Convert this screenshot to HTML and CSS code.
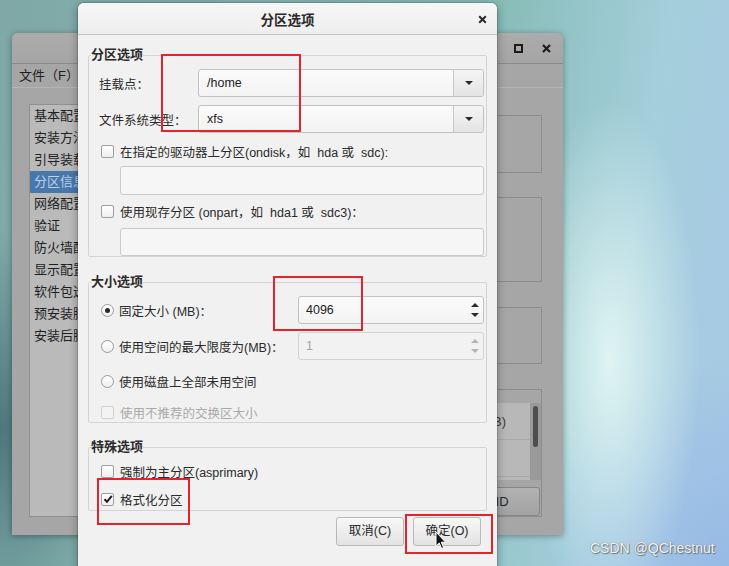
FILE: index.html
```html
<!DOCTYPE html>
<html lang="zh-CN">
<head>
<meta charset="utf-8">
<title>分区选项</title>
<link rel="stylesheet" href="styles.css">
</head>
<body>
<div class="desktop">

  <div class="bgwin">
    <div class="bgwin-title">
      <span class="wbtn wbtn-max"></span>
      <svg class="wbtn-close" width="9" height="9" viewBox="0 0 9 9"><path d="M1 1 L8 8 M8 1 L1 8" stroke="#1c1c1c" stroke-width="2.2"/></svg>
    </div>
    <div class="bgwin-menu">文件（F）</div>
    <div class="bgwin-body">
      <ul class="nav">
        <li>基本配置</li>
        <li>安装方法</li>
        <li>引导装载程序选项</li>
        <li class="sel">分区信息</li>
        <li>网络配置</li>
        <li>验证</li>
        <li>防火墙配置</li>
        <li>显示配置</li>
        <li>软件包选择</li>
        <li>预安装脚本</li>
        <li>安装后脚本</li>
      </ul>
      <div class="bgwin-main">
        <div class="pane pane-1"></div>
        <div class="pane pane-2"></div>
        <div class="pane pane-3"></div>
        <div class="pane pane-4">
          <div class="disk-list">
            <div class="disk-rows">
              <div class="disk-row">sda (8192 MB)</div>
              <div class="disk-row"></div>
            </div>
            <div class="scroll"><span class="thumb"></span></div>
          </div>
          <div class="raid-row"><span class="raid-btn">RAID</span></div>
        </div>
      </div>
    </div>
  </div>

  <div class="dialog">
    <div class="dlg-title">
      <span class="dlg-title-text">分区选项</span>
      <svg class="dlg-close" width="9" height="9" viewBox="0 0 9 9"><path d="M1.2 1.2 L7.8 7.8 M7.8 1.2 L1.2 7.8" stroke="#2a2a2a" stroke-width="2"/></svg>
    </div>
    <div class="dlg-body">

      <fieldset class="group group-1">
        <legend>分区选项</legend>
        <div class="row combo-row">
          <span class="lbl lbl-w1">挂载点：</span>
          <div class="combo"><span class="combo-text">/home</span><span class="combo-btn"><i class="tri-down"></i></span></div>
        </div>
        <div class="row combo-row gap-8">
          <span class="lbl lbl-w1">文件系统类型：</span>
          <div class="combo"><span class="combo-text">xfs</span><span class="combo-btn"><i class="tri-down"></i></span></div>
        </div>
        <div class="row check-row gap-9">
          <span class="check"></span>
          <span class="lbl">在指定的驱动器上分区(ondisk，如&nbsp; hda 或&nbsp; sdc):</span>
        </div>
        <div class="entry gap-6"></div>
        <div class="row check-row gap-7">
          <span class="check"></span>
          <span class="lbl">使用现存分区 (onpart，如&nbsp; hda1 或&nbsp; sdc3)：</span>
        </div>
        <div class="entry entry-last gap-8"></div>
      </fieldset>

      <fieldset class="group group-2">
        <legend>大小选项</legend>
        <div class="row spin-row">
          <span class="radio on"></span>
          <span class="lbl lbl-w2">固定大小 (MB)：</span>
          <div class="spin"><span class="spin-text">4096</span><span class="spin-arrows"><i class="tri-up"></i><i class="tri-down"></i></span></div>
        </div>
        <div class="row spin-row gap-8">
          <span class="radio"></span>
          <span class="lbl lbl-w2">使用空间的最大限度为(MB)：</span>
          <div class="spin disabled"><span class="spin-text">1</span><span class="spin-arrows"><i class="tri-up"></i><i class="tri-down"></i></span></div>
        </div>
        <div class="row check-row gap-12">
          <span class="radio"></span>
          <span class="lbl">使用磁盘上全部未用空间</span>
        </div>
        <div class="row check-row gap-13">
          <span class="check disabled"></span>
          <span class="lbl muted">使用不推荐的交换区大小</span>
        </div>
      </fieldset>

      <fieldset class="group group-3">
        <legend>特殊选项</legend>
        <div class="row check-row">
          <span class="check"></span>
          <span class="lbl">强制为主分区(asprimary)</span>
        </div>
        <div class="row check-row gap-10">
          <span class="check on"><svg width="10" height="10" viewBox="0 0 10 10"><path d="M1.5 5.2 L4 7.8 L8.8 1.8" fill="none" stroke="#1e1e1e" stroke-width="2"/></svg></span>
          <span class="lbl">格式化分区</span>
        </div>
      </fieldset>

      <div class="actions">
        <span class="btn">取消(C)</span>
        <span class="btn">确定(O)</span>
      </div>
    </div>
  </div>

  <div class="mark mark-1"></div>
  <div class="mark mark-2"></div>
  <div class="mark mark-3"></div>
  <div class="mark mark-4"></div>

  <svg class="cursor" width="12" height="19" viewBox="0 0 12 19"><path d="M1 1 L1 15 L4.3 12 L6.6 17.5 L8.6 16.6 L6.3 11.2 L10.6 11.2 Z" fill="#111" stroke="#fff" stroke-width="1" stroke-linejoin="round"/></svg>

  <div class="watermark">CSDN @QChestnut</div>
</div>
</body>
</html>
```

FILE: styles.css
```css
* { box-sizing: border-box; }
html, body { margin: 0; padding: 0; }
body {
  width: 729px;
  height: 566px;
  overflow: hidden;
  font-family: "Liberation Sans", "Noto Sans CJK SC", sans-serif;
  font-size: 12.5px;
  color: #2a2a2a;
}
.desktop {
  position: relative;
  width: 729px;
  height: 566px;
  overflow: hidden;
  background:
    radial-gradient(ellipse 90px 260px at 610px 360px, rgba(226,246,244,0.95), rgba(226,246,244,0) 100%),
    radial-gradient(ellipse 120px 200px at 0px 430px, rgba(70,110,118,0.85), rgba(70,110,118,0) 100%),
    radial-gradient(ellipse 200px 200px at 729px 560px, rgba(150,185,230,0.9), rgba(150,185,230,0) 100%),
    linear-gradient(100deg, #7fa8a6 0%, #86bcb7 60%, #a5cfdc 82%, #a8c8e6 100%);
}

/* ---------- background window ---------- */
.bgwin {
  position: absolute;
  left: 12px;
  top: 33px;
  width: 551px;
  height: 502px;
  background: #a6a6a6;
  border-radius: 6px 6px 0 0;
  box-shadow: 0 1px 6px rgba(0,0,0,0.35);
  display: flex;
  flex-direction: column;
  color: #1f1f1f;
  font-size: 13px;
}
.bgwin-title {
  height: 31px;
  flex: none;
  border-bottom: 1px solid #8b8b8b;
  background: linear-gradient(#acacac, #a5a5a5);
  border-radius: 6px 6px 0 0;
  display: flex;
  align-items: center;
  justify-content: flex-end;
  gap: 19px;
  padding-right: 12px;
}
.wbtn-max {
  width: 9px;
  height: 9px;
  border: 2px solid #1c1c1c;
}
.bgwin-menu {
  height: 24px;
  flex: none;
  border-bottom: 1px solid #b4b4b4;
  padding-left: 7px;
  line-height: 23px;
}
.bgwin-body {
  flex: 1;
  display: flex;
  padding: 16px 21px 18px 17px;
  min-height: 0;
}
.nav {
  list-style: none;
  margin: 0;
  padding: 0;
  width: 150px;
  flex: none;
  background: #bababa;
  border: 1px solid #8f8f8f;
}
.nav li {
  height: 22px;
  line-height: 22px;
  padding-left: 4px;
  white-space: nowrap;
  overflow: hidden;
}
.nav li.sel {
  background: #4677ad;
  color: #bcd0e6;
}
.bgwin-main {
  flex: 1;
  margin-left: 20px;
  display: flex;
  flex-direction: column;
}
.pane { border: 1px solid #8c8c8c; flex: none; }
.pane-1 { margin-top: 11px; height: 58px; }
.pane-2 { margin-top: 24px; height: 85px; }
.pane-3 { margin-top: 25px; height: 57px; }
.pane-4 {
  margin-top: 25px;
  flex: 1;
  display: flex;
  flex-direction: column;
  padding-top: 13px;
}
.disk-list {
  height: 77px;
  display: flex;
  background: #b8b8b8;
}
.disk-rows { flex: 1; }
.disk-row {
  height: 37px;
  line-height: 37px;
  text-align: right;
  padding-right: 24px;
  border-bottom: 1px solid #a9a9a9;
  color: #3a3a3a;
}
.scroll {
  width: 11px;
  background: #9a9a9a;
  padding: 3px 3px;
}
.thumb {
  display: block;
  width: 5px;
  height: 41px;
  border-radius: 3px;
  background: #4e4e4e;
}
.raid-row {
  margin-top: 7px;
  display: flex;
  justify-content: flex-end;
  padding-right: 1px;
}
.raid-btn {
  width: 94px;
  height: 29px;
  line-height: 27px;
  text-align: center;
  border: 1px solid #868686;
  border-radius: 3px;
  background: linear-gradient(#b2b2b2, #a2a2a2);
  color: #2a2a2a;
}

/* ---------- dialog ---------- */
.dialog {
  position: absolute;
  left: 78px;
  top: 3px;
  width: 419px;
  height: 600px;
  background: #f1f1f1;
  border-radius: 6px 6px 0 0;
  box-shadow: 0 0 0 1px rgba(0,0,0,0.12), 0 2px 10px rgba(0,0,0,0.35);
}
.dlg-title {
  height: 32px;
  border-bottom: 1px solid #c3c3c3;
  background: linear-gradient(#f6f6f6, #eeeeee);
  border-radius: 6px 6px 0 0;
  display: flex;
  align-items: center;
  justify-content: center;
  position: relative;
}
.dlg-title-text {
  font-weight: bold;
  font-size: 13.5px;
  color: #2b2b2b;
}
.dlg-close {
  position: absolute;
  right: 10px;
  top: 12px;
}
.dlg-body {
  padding: 0 10px;
}
.group {
  margin: 0;
  padding: 0 2px 0 10px;
  border: 1px solid #d4d4d4;
  border-radius: 2px;
  min-width: 0;
}
.group legend {
  padding: 0;
  margin-left: -8px;
  font-weight: bold;
  font-size: 13px;
  line-height: 16px;
  color: #2b2b2b;
}
.group-1 { margin-top: 12px; padding-top: 6px; }
.group-2 { margin-top: 17px; padding-top: 6px; padding-bottom: 1px; }
.group-3 { margin-top: 16px; padding-top: 7px; padding-bottom: 2px; }

.row { display: flex; align-items: center; }
.combo-row, .spin-row { height: 28px; }
.check-row { height: 18px; padding-left: 2px; }
.spin-row { padding-left: 2px; }
.gap-6 { margin-top: 6px; }
.gap-7 { margin-top: 7px; }
.gap-8 { margin-top: 8px; }
.gap-9 { margin-top: 9px; }
.gap-10 { margin-top: 10px; }
.gap-12 { margin-top: 12px; }
.gap-13 { margin-top: 13px; }

.lbl { white-space: nowrap; }
.lbl-w1 { width: 99px; flex: none; }
.lbl-w2 { width: 179px; flex: none; }
.muted { color: #a9a9a9; }

.combo {
  flex: 1;
  height: 28px;
  display: flex;
  border: 1px solid #c2c2c2;
  border-radius: 3px;
  background: linear-gradient(#fbfbfb, #f3f3f3);
}
.combo-text {
  flex: 1;
  padding-left: 8px;
  line-height: 26px;
  color: #222;
}
.combo-btn {
  width: 30px;
  flex: none;
  border-left: 1px solid #c8c8c8;
  border-radius: 0 3px 3px 0;
  background: linear-gradient(#f5f5f5, #e4e4e4);
  display: flex;
  align-items: center;
  justify-content: center;
}
.tri-down, .tri-up {
  display: block;
  width: 0;
  height: 0;
  border-left: 4px solid transparent;
  border-right: 4px solid transparent;
}
.tri-down { border-top: 4px solid #2b2b2b; }
.tri-up { border-bottom: 4px solid #2b2b2b; }

.entry {
  height: 29px;
  margin-left: 21px;
  border: 1px solid #cacaca;
  border-radius: 3px;
  background: #f6f6f6;
}
.entry-last { height: 28px; }

.check {
  width: 13px;
  height: 13px;
  flex: none;
  border: 1px solid #9e9e9e;
  border-radius: 2px;
  background: linear-gradient(#ffffff, #efefef);
  margin-right: 6px;
  display: flex;
  align-items: center;
  justify-content: center;
}
.check.disabled { border-color: #d2d2d2; background: #f3f3f3; }
.radio {
  width: 13px;
  height: 13px;
  flex: none;
  border: 1px solid #9a9a9a;
  border-radius: 50%;
  background: linear-gradient(#ffffff, #efefef);
  margin-right: 5px;
  display: flex;
  align-items: center;
  justify-content: center;
}
.radio.on::after {
  content: "";
  width: 5px;
  height: 5px;
  border-radius: 50%;
  background: #2a2a2a;
}

.spin {
  flex: 1;
  height: 28px;
  display: flex;
  border: 1px solid #c2c2c2;
  border-radius: 3px;
  background: linear-gradient(#fbfbfb, #f3f3f3);
}
.spin-text {
  flex: 1;
  padding-left: 7px;
  line-height: 26px;
  color: #222;
}
.spin-arrows {
  width: 14px;
  flex: none;
  display: flex;
  flex-direction: column;
  justify-content: space-between;
  align-items: center;
  padding: 6px 3px 6px 0;
}
.spin.disabled { border-color: #d3d3d3; background: #f2f2f2; }
.spin.disabled .spin-text { color: #a6a6a6; }
.spin.disabled .tri-up { border-bottom-color: #b4b4b4; }
.spin.disabled .tri-down { border-top-color: #b4b4b4; }

.actions {
  margin-top: 6px;
  display: flex;
  justify-content: flex-end;
  gap: 9px;
  padding-right: 6px;
}
.btn {
  width: 68px;
  height: 29px;
  line-height: 27px;
  text-align: center;
  border: 1px solid #b9b9b9;
  border-radius: 3px;
  background: linear-gradient(#f7f7f7, #e3e3e3);
  color: #2a2a2a;
}

/* ---------- overlays ---------- */
.mark {
  position: absolute;
  border: 2px solid #e4232b;
}
.mark-1 { left: 161px; top: 54px; width: 140px; height: 78px; }
.mark-2 { left: 273px; top: 276px; width: 90px; height: 55px; }
.mark-3 { left: 97px; top: 478px; width: 93px; height: 47px; }
.mark-4 { left: 405px; top: 514px; width: 88px; height: 40px; }

.cursor {
  position: absolute;
  left: 435px;
  top: 531px;
}
.watermark {
  position: absolute;
  left: 590px;
  top: 540px;
  font-family: "Liberation Sans", sans-serif;
  font-size: 14px;
  color: #f4f4f4;
  text-shadow: 0 0 1px #6b6b6b, 1px 1px 1px rgba(80,80,80,0.7);
}
```
